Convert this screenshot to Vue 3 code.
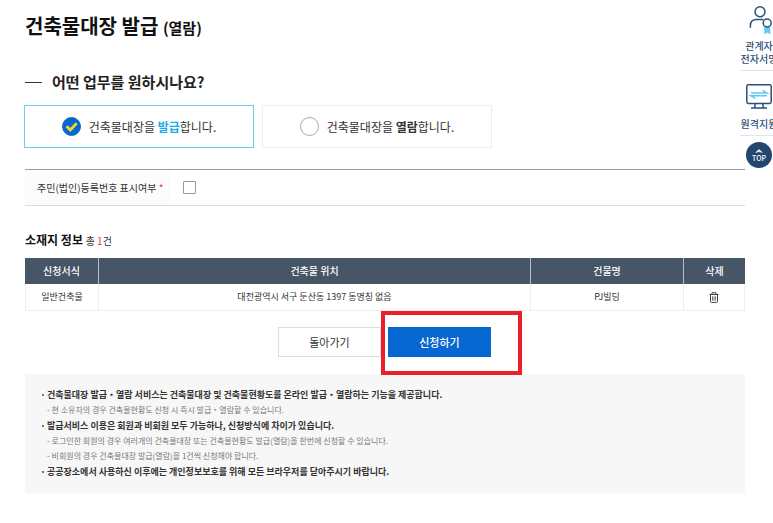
<script setup>
import { ref } from 'vue'

const task = ref('issue')
const showNumber = ref(false)

const tasks = [
  { value: 'issue', verb: '발급' },
  { value: 'view', verb: '열람' },
]

const buildings = ref([
  { id: 1, form: '일반건축물', address: '대전광역시 서구 둔산동 1397 동명칭 없음', name: 'PJ빌딩' },
])

const notices = [
  {
    text: '건축물대장 발급・열람 서비스는 건축물대장 및 건축물현황도를 온라인 발급・열람하는 기능을 제공합니다.',
    details: ['현 소유자의 경우 건축물현황도 신청 시 즉시 발급・열람할 수 있습니다.'],
  },
  {
    text: '발급서비스 이용은 회원과 비회원 모두 가능하나, 신청방식에 차이가 있습니다.',
    details: [
      '로그인한 회원의 경우 여러개의 건축물대장 또는 건축물현황도 발급(열람)을 한번에 신청할 수 있습니다.',
      '비회원의 경우 건축물대장 발급(열람)을 1건씩 신청해야 합니다.',
    ],
  },
  {
    text: '공공장소에서 사용하신 이후에는 개인정보보호를 위해 모든 브라우저를 닫아주시기 바랍니다.',
    details: [],
  },
]

function removeBuilding(id) {
  buildings.value = buildings.value.filter((b) => b.id !== id)
}
</script>

<template>
  <div class="page">
    <main class="content">
      <h1 class="title">건축물대장 발급 <small>(열람)</small></h1>

      <h2 class="question"><span class="dash"></span>어떤 업무를 원하시나요?</h2>

      <div class="choices">
        <label
          v-for="t in tasks"
          :key="t.value"
          class="choice"
          :class="{ selected: task === t.value }"
        >
          <span class="mark">
            <input v-model="task" type="radio" name="task" :value="t.value" />
            <svg v-if="task === t.value" viewBox="0 0 20 20" width="19" height="19">
              <path d="M4.8 9.7 8.8 13.6 15.4 6.6" fill="none" stroke="#fdd22b" stroke-width="3" />
            </svg>
          </span>
          <span>건축물대장을 <b>{{ t.verb }}</b>합니다.</span>
        </label>
      </div>

      <div class="option">
        <label class="option-label" for="show-number">주민(법인)등록번호 표시여부 <em>*</em></label>
        <div class="option-field">
          <input id="show-number" v-model="showNumber" type="checkbox" />
        </div>
      </div>

      <h3 class="subtitle">소재지 정보 <span>총 <i>{{ buildings.length }}</i>건</span></h3>

      <table class="list">
        <colgroup>
          <col class="c-form" />
          <col class="c-address" />
          <col class="c-name" />
          <col class="c-delete" />
        </colgroup>
        <thead>
          <tr>
            <th>신청서식</th>
            <th>건축물 위치</th>
            <th>건물명</th>
            <th>삭제</th>
          </tr>
        </thead>
        <tbody>
          <tr v-for="b in buildings" :key="b.id">
            <td>{{ b.form }}</td>
            <td>{{ b.address }}</td>
            <td>{{ b.name }}</td>
            <td>
              <button class="trash" type="button" aria-label="삭제" @click="removeBuilding(b.id)">
                <svg viewBox="0 0 10 11" width="10" height="11" fill="none" stroke="#444">
                  <path d="M0.5 2.5H9.5M3 2.3V0.7H7V2.3" />
                  <path d="M1.5 2.5V9.3Q1.5 10.4 2.6 10.4H7.4Q8.5 10.4 8.5 9.3V2.5" />
                  <path d="M3.7 4.4V8.6M6.3 4.4V8.6" stroke-width="0.9" />
                  <path d="M5 4.4V8.6" stroke-width="0.5" />
                </svg>
              </button>
            </td>
          </tr>
        </tbody>
      </table>

      <div class="actions">
        <button class="btn" type="button">돌아가기</button>
        <div class="highlight">
          <button class="btn primary" type="button">신청하기</button>
        </div>
      </div>

      <section class="notice">
        <ul>
          <li v-for="n in notices" :key="n.text">
            <strong>{{ n.text }}</strong>
            <ul v-if="n.details.length">
              <li v-for="d in n.details" :key="d">- {{ d }}</li>
            </ul>
          </li>
        </ul>
      </section>
    </main>

    <nav class="quick">
      <a class="quick-item" href="#sign">
        <svg viewBox="0 0 26 29" width="26" height="29" fill="none">
          <path d="M18.3 20V28.4L21.3 26.4 24.3 28.4V20Z" fill="#5ecbf5" />
          <circle cx="14" cy="5.8" r="5" stroke="#2c4f76" stroke-width="1.5" />
          <path
            d="M4.4 21.8V19.6Q4.4 13.6 10.4 13.6H17.6"
            stroke="#2c4f76"
            stroke-width="1.5"
          />
          <circle cx="21.2" cy="17" r="4" fill="#fff" stroke="#2c4f76" stroke-width="1.5" />
        </svg>
        <span>관계자<br />전자서명</span>
      </a>
      <a class="quick-item" href="#remote">
        <svg viewBox="0 0 26 26" width="26" height="26" fill="none">
          <rect x="0.8" y="0.8" width="24.4" height="18.6" rx="1.6" stroke="#2c4f76" stroke-width="1.5" />
          <path d="M9.3 19.6 8.6 23.6M16.7 19.6 17.4 23.6M5 23.9H21" stroke="#2c4f76" stroke-width="1.5" />
          <path d="M5 9H21L16.6 6.4M21 11.8H5L9.4 14.4" stroke="#5ecbf5" stroke-width="1.5" />
        </svg>
        <span>원격지원</span>
      </a>
      <a class="top" href="#app">
        <svg viewBox="0 0 8 4" width="8" height="4">
          <path d="M0.6 3.6 4 0.5 7.4 3.6 4 2.6Z" fill="#fff" stroke="#fff" stroke-width="0.5" />
        </svg>
        TOP
      </a>
    </nav>
  </div>
</template>

<style>
body {
  margin: 0;
  background: #fff;
}
</style>

<style scoped>
.page {
  position: relative;
  overflow: hidden;
  font-family: 'Noto Sans CJK KR', 'Noto Sans', sans-serif;
  color: #333;
}
.page *,
.page *::after {
  box-sizing: border-box;
}
.content {
  padding: 12px 28px 29px 25px;
}
h1,
h2,
h3,
ul {
  margin: 0;
  padding: 0;
  list-style: none;
}
button {
  font-family: inherit;
  cursor: pointer;
}
.title {
  font-size: 20px;
  line-height: 28px;
  color: #111;
}
.title small {
  font-size: 15px;
}
.question {
  display: flex;
  align-items: center;
  gap: 10px;
  margin-top: 29px;
  font-size: 15px;
  line-height: 22px;
  color: #222;
}
.dash {
  width: 17px;
  height: 1px;
  background: #333;
}
.choices {
  display: flex;
  gap: 8px;
  margin: 12px 0 21px -1px;
}
.choice {
  display: flex;
  flex: 0 1 230px;
  align-items: center;
  justify-content: center;
  gap: 8px;
  height: 43px;
  border: 1px solid #eee;
  font-size: 12px;
  cursor: pointer;
}
.choice.selected {
  border-color: #6fcbec;
}
.choice.selected b {
  color: #1ba9f0;
}
.mark {
  display: grid;
}
.mark > * {
  grid-area: 1 / 1;
}
.mark input {
  appearance: none;
  width: 19px;
  height: 19px;
  margin: 0;
  border: 1px solid #aaa;
  border-radius: 50%;
  background: #fff;
}
.mark input:checked {
  border-color: #0567cf;
  background: #0567cf;
}
.mark svg {
  pointer-events: none;
}
.option {
  display: flex;
  border-top: 1px solid #999;
  border-bottom: 1px solid #ddd;
}
.option-label {
  width: 145px;
  padding: 0 12px;
  background: #fcfcfc;
  font-size: 10px;
  line-height: 35px;
  white-space: nowrap;
}
.option-label em {
  font-style: normal;
  color: #e33;
}
.option-field {
  display: flex;
  align-items: center;
  padding: 0 13px;
}
.option-field input {
  appearance: none;
  width: 13px;
  height: 13px;
  margin: 0;
  border: 1px solid #999;
  border-radius: 1px;
  background: #fff;
}
.option-field input:checked {
  background: #0567cf;
  box-shadow: inset 0 0 0 2px #fff;
}
.subtitle {
  margin-top: 24px;
  font-size: 12px;
  line-height: 20px;
  color: #111;
}
.subtitle span {
  font-size: 10px;
  font-weight: 400;
  color: #333;
}
.subtitle i {
  font-style: normal;
  color: #e33;
}
.list {
  width: 100%;
  margin-top: 7px;
  border-collapse: separate;
  border-spacing: 0;
  table-layout: fixed;
  text-align: center;
}
.c-form {
  width: 74px;
}
.c-name {
  width: 153px;
}
.c-delete {
  width: 61px;
}
.list th {
  height: 26px;
  padding: 0;
  border-right: 1px solid #b5bdc5;
  background: #465666;
  font-size: 10px;
  font-weight: 500;
  line-height: 16px;
  color: #fff;
}
.list th:last-child {
  border-right: 0;
}
.list td {
  height: 27px;
  padding: 0;
  border-right: 1px solid #eee;
  border-bottom: 1px solid #eee;
  font-size: 9px;
  line-height: 14px;
}
.list td:first-child {
  border-left: 1px solid #eee;
}
.trash {
  display: block;
  margin: 0 auto;
  padding: 0;
  border: 0;
  background: none;
}
.trash svg {
  display: block;
}
.actions {
  display: flex;
  justify-content: center;
  gap: 7px;
  margin: 16px 1px 17px 0;
}
.btn {
  width: 103px;
  height: 30px;
  padding: 0;
  border: 1px solid #ddd;
  background: #fff;
  font-size: 11px;
  color: #333;
}
.btn.primary {
  display: block;
  border-color: #0567cf;
  background: #0567cf;
  font-weight: 500;
  color: #fff;
}
.highlight {
  position: relative;
}
.highlight::after {
  content: '';
  position: absolute;
  inset: -16px -31px -18px -7px;
  border: 4px solid #ea1f27;
  pointer-events: none;
}
.notice {
  padding: 13px 16px;
  background: #f7f7f7;
  font-size: 9px;
  line-height: 15px;
}
.notice > ul > li {
  position: relative;
  margin-bottom: 1px;
  padding-left: 6px;
}
.notice > ul > li::before {
  content: '';
  position: absolute;
  top: 7px;
  left: 1px;
  width: 2px;
  height: 2px;
  background: #777;
}
.notice strong {
  display: block;
}
.notice li li {
  font-size: 8px;
  color: #777;
}
.quick {
  position: absolute;
  top: 6px;
  right: -5px;
  display: flex;
  flex-direction: column;
  align-items: center;
  width: 38px;
}
.quick-item {
  display: flex;
  flex-direction: column;
  align-items: center;
  gap: 4px;
  width: 100%;
  margin-bottom: 13px;
  padding-bottom: 5px;
  border-bottom: 1px solid #d3e9f5;
  font-size: 10px;
  font-weight: 500;
  line-height: 13px;
  text-align: center;
  text-decoration: none;
  white-space: nowrap;
  color: #2c4f76;
}
.quick-item + .quick-item {
  gap: 7px;
  margin-bottom: 6px;
}
.top {
  display: flex;
  flex-direction: column;
  align-items: center;
  justify-content: center;
  gap: 1px;
  width: 26px;
  height: 26px;
  border-radius: 50%;
  background: #21476f;
  font-size: 7px;
  font-weight: 500;
  line-height: 8px;
  text-decoration: none;
  color: #fff;
}
</style>
